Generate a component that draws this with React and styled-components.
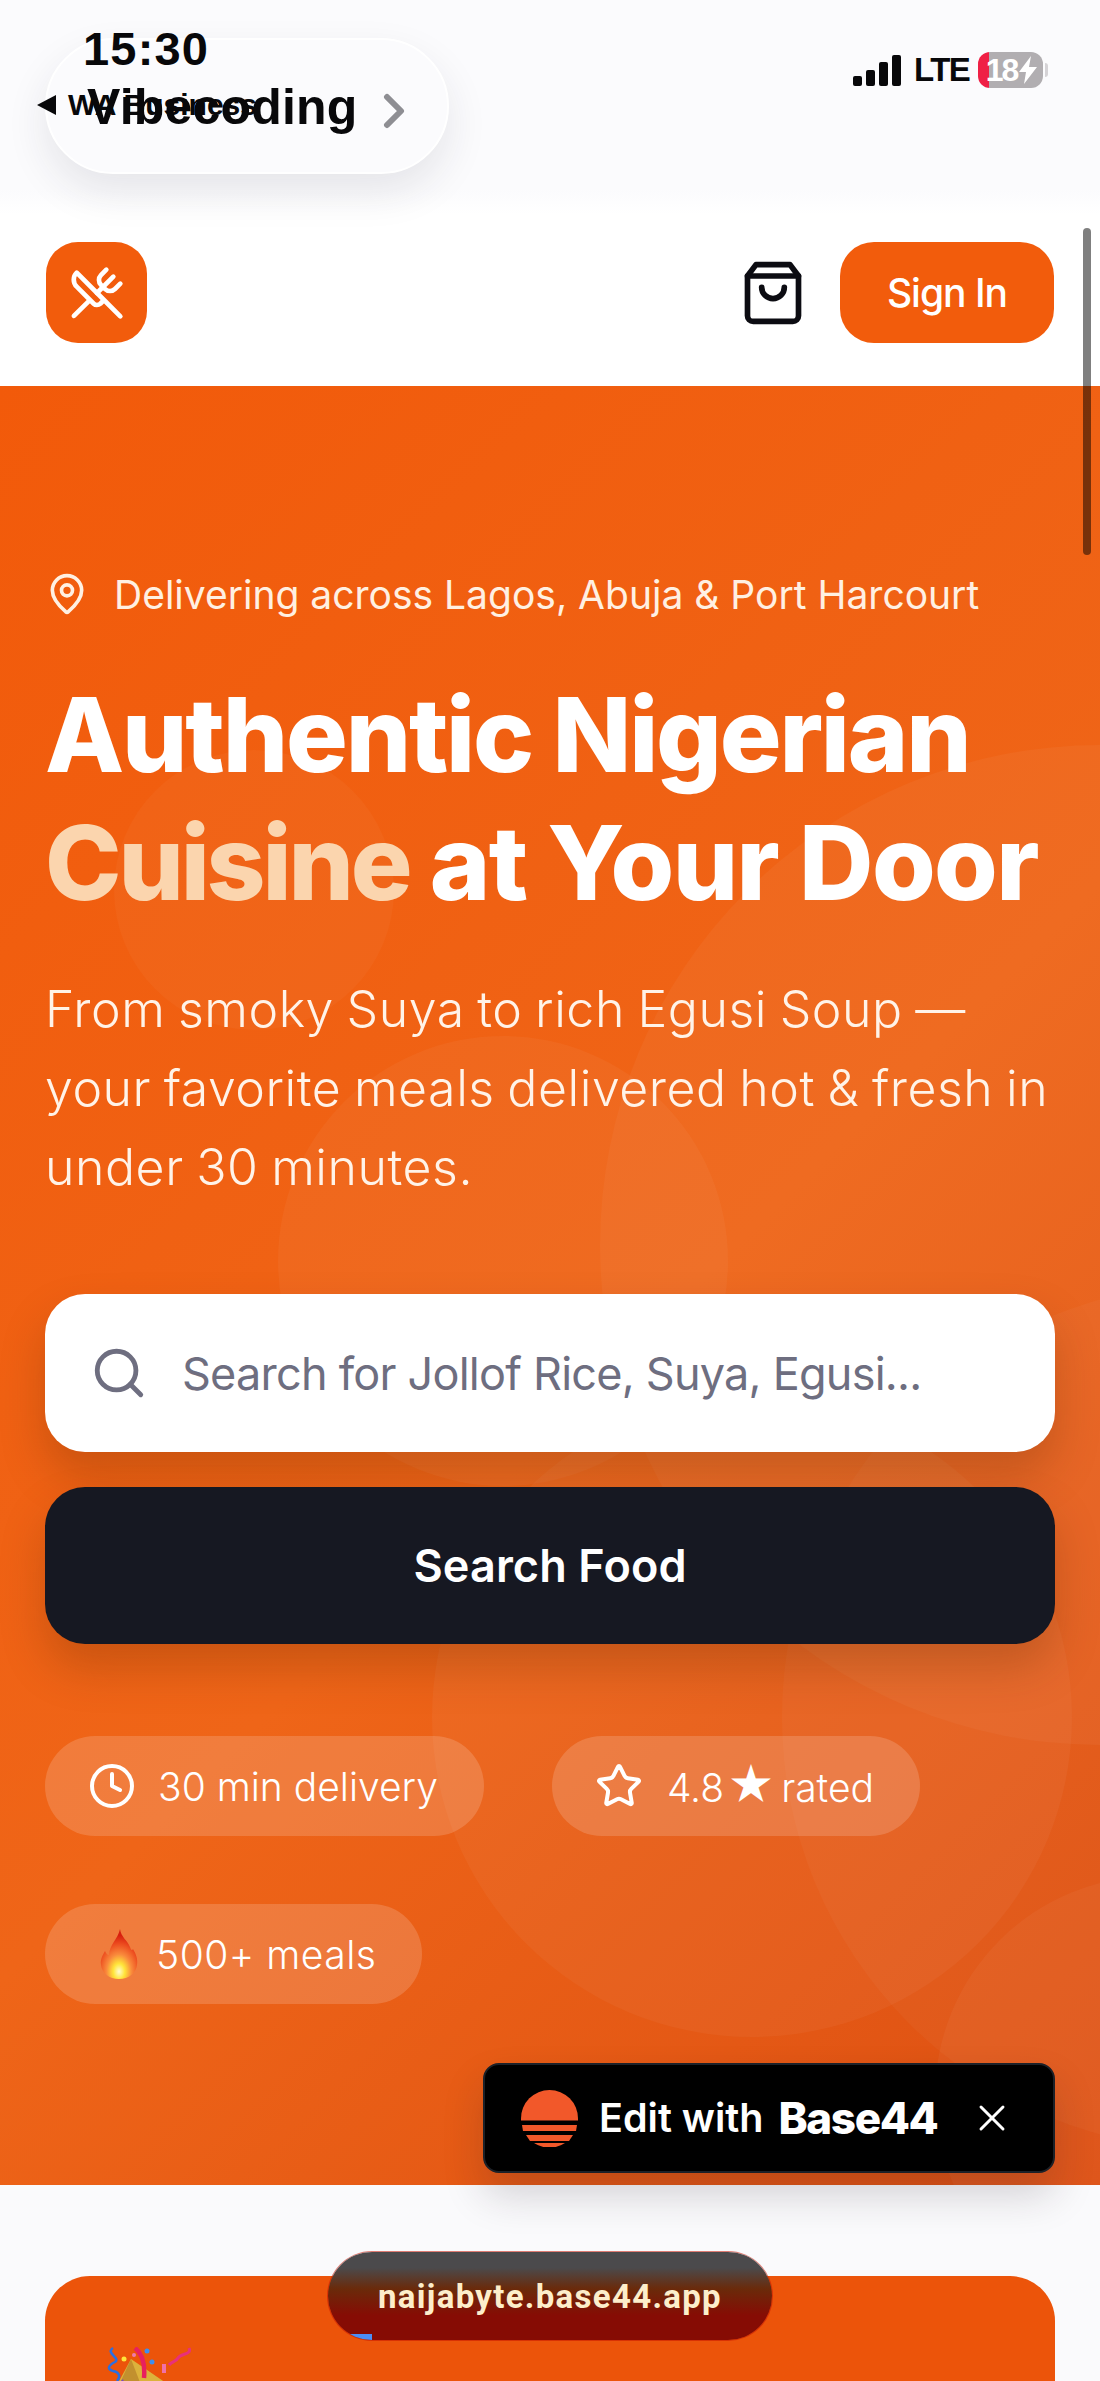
import React from 'react';
import styled, { createGlobalStyle } from 'styled-components';
import { Clock, MapPin, Search, Star, UtensilsCrossed, X } from 'lucide-react';

const GlobalStyle = createGlobalStyle`
  html, body {
    margin: 0;
    padding: 0;
    background: #fafafc;
  }
  * {
    box-sizing: border-box;
  }
`;

const Page = styled.div`
  position: relative;
  width: 1100px;
  height: 2381px;
  overflow: hidden;
  background: #fafafc;
  font-family: Inter, "Liberation Sans", sans-serif;
  color: #fff;
`;

/* phone chrome on top of the page */
const StatusArea = styled.div`
  height: 215px;
  background: linear-gradient(#fbfbfd 88%, #ffffff);
`;

const BackPill = styled.div`
  position: absolute;
  left: 45px;
  top: 38px;
  width: 404px;
  height: 136px;
  border-radius: 68px;
  background: #fbfbfd;
  border: 2px solid #ffffff;
  box-shadow: 0 18px 40px rgba(40, 40, 60, 0.1);
`;

const Time = styled.div`
  position: absolute;
  left: 83px;
  top: 23px;
  font-family: "Liberation Sans", sans-serif;
  font-size: 47px;
  line-height: 52px;
  font-weight: 700;
  letter-spacing: 1.2px;
  color: #08080a;
`;

const BackArrow = styled.div`
  position: absolute;
  left: 37px;
  top: 95px;
  width: 0;
  height: 0;
  border-top: 10px solid transparent;
  border-bottom: 10px solid transparent;
  border-right: 19px solid #08080a;
`;

const BackLabel = styled.div`
  position: absolute;
  left: 68px;
  top: 88px;
  font-family: "Liberation Sans", sans-serif;
  font-size: 30px;
  line-height: 34px;
  font-weight: 700;
  color: #08080a;
`;

const AppTitle = styled.div`
  position: absolute;
  left: 87px;
  top: 80px;
  font-family: "Liberation Sans", sans-serif;
  font-size: 50px;
  line-height: 54px;
  font-weight: 700;
  letter-spacing: 0.2px;
  color: #08080a;
`;

const PillChevron = styled.svg`
  position: absolute;
  left: 383px;
  top: 93px;
`;

const StatusRight = styled.div`
  position: absolute;
  left: 853px;
  top: 52px;
  display: flex;
  align-items: center;
  gap: 13px;
  height: 36px;
`;

const SignalBars = styled.div`
  display: flex;
  align-items: flex-end;
  gap: 4px;
  height: 32px;
`;

const SignalBar = styled.span`
  width: 9px;
  height: ${(p) => p.$h}px;
  border-radius: 2px;
  background: #08080a;
`;

const NetworkLabel = styled.span`
  font-family: "Liberation Sans", sans-serif;
  font-size: 33px;
  font-weight: 700;
  letter-spacing: -1.5px;
  color: #08080a;
`;

const Battery = styled.div`
  position: relative;
  display: flex;
  align-items: center;
  justify-content: flex-end;
  gap: 1px;
  width: 65px;
  height: 36px;
  margin-left: -4px;
  padding-right: 5px;
  border-radius: 12px;
  background: linear-gradient(90deg, #ef2045 17%, #b1aeb1 17%);
  font-family: "Liberation Sans", sans-serif;
  font-size: 32px;
  font-weight: 700;
  letter-spacing: -2px;
  color: #fff;

  &::after {
    content: '';
    position: absolute;
    right: -5px;
    top: 11px;
    width: 3px;
    height: 14px;
    border-radius: 0 3px 3px 0;
    background: #d5d3d6;
  }
`;

const Nav = styled.nav`
  display: flex;
  align-items: center;
  justify-content: space-between;
  height: 171px;
  padding: 0 46px 16px;
  background: #fff;
`;

const LogoTile = styled.div`
  display: flex;
  align-items: center;
  justify-content: center;
  width: 101px;
  height: 101px;
  border-radius: 32px;
  background: #f25c0c;
  color: #fff;
`;

const NavActions = styled.div`
  display: flex;
  align-items: center;
  gap: 33px;
`;

const CartButton = styled.div`
  display: flex;
  color: #0c0c12;
`;

const SignInButton = styled.div`
  display: flex;
  align-items: center;
  justify-content: center;
  width: 214px;
  height: 101px;
  border-radius: 34px;
  background: #f25c0c;
  font-size: 39px;
  font-weight: 500;
  letter-spacing: -1px;
  color: #fff;
`;

const Hero = styled.section`
  position: relative;
  height: 1799px;
  padding: 180px 45px 0;
  overflow: hidden;
  background: linear-gradient(135deg, #f25a0a 0%, #ef6518 55%, #dd5013 100%);
`;

const Blob = styled.div`
  position: absolute;
  left: ${(p) => p.$x}px;
  top: ${(p) => p.$y}px;
  width: ${(p) => p.$d}px;
  height: ${(p) => p.$d}px;
  border-radius: 50%;
  background: rgba(255, 255, 255, ${(p) => p.$a});
`;

const HeroContent = styled.div`
  position: relative;
`;

const LocationRow = styled.div`
  display: flex;
  align-items: center;
  gap: 25px;
  height: 56px;
  font-size: 39px;
  color: #fff0e2;
`;

const Headline = styled.h1`
  margin: 49px 0 0;
  font-size: 103px;
  line-height: 128px;
  font-weight: 800;
  letter-spacing: -2.2px;
  white-space: nowrap;
  color: #fff;
`;

const Accent = styled.span`
  letter-spacing: -3.2px;
  color: #fbd5ae;
`;

const HeadlineTail = styled.span`
  letter-spacing: -1.6px;
`;

const Lead = styled.p`
  margin: 43px 0 0;
  font-size: 50px;
  line-height: 79px;
  font-weight: 300;
  letter-spacing: 0.55px;
  word-spacing: -2px;
  white-space: nowrap;
  color: #fff3e8;
`;

const SearchBox = styled.div`
  display: flex;
  align-items: center;
  gap: 34px;
  height: 158px;
  margin-top: 87px;
  padding: 0 45px;
  border-radius: 40px;
  background: #fff;
  box-shadow: 0 24px 44px rgba(90, 40, 0, 0.25);
  font-size: 45px;
  letter-spacing: -0.76px;
  color: #6e6e80;
`;

const SearchButton = styled.div`
  display: flex;
  align-items: center;
  justify-content: center;
  height: 157px;
  margin-top: 35px;
  border-radius: 40px;
  background: #161822;
  box-shadow: 0 24px 44px rgba(90, 40, 0, 0.25);
  font-size: 45px;
  font-weight: 600;
  letter-spacing: 0.1px;
  color: #fff;
`;

const Chips = styled.div`
  display: flex;
  flex-wrap: wrap;
  gap: 68px;
  margin-top: 92px;
`;

const Chip = styled.div`
  display: flex;
  align-items: center;
  gap: ${(p) => p.$gap}px;
  height: 100px;
  padding: 0 46px 0 ${(p) => p.$pad}px;
  border-radius: 50px;
  background: rgba(255, 255, 255, 0.16);
  font-size: 39px;
  font-weight: 300;
  letter-spacing: ${(p) => p.$track}px;
  white-space: nowrap;
  color: #fff;
`;

const StarMark = styled.span`
  margin: 0 6px 0 3px;
  font-size: 46px;
  line-height: 1;
`;

const Offers = styled.section`
  padding: 91px 45px 0;
`;

const PromoCard = styled.div`
  height: 400px;
  padding: 71px 0 0 62px;
  border-radius: 45px;
  background: #ec540a;
`;

const ScrollThumb = styled.div`
  position: absolute;
  left: 1083px;
  top: 228px;
  width: 8px;
  height: 327px;
  border-radius: 4px;
  background: rgba(0, 0, 0, 0.5);
`;

const EditBadge = styled.div`
  position: absolute;
  left: 483px;
  top: 2063px;
  display: flex;
  align-items: center;
  width: 572px;
  height: 110px;
  padding: 0 0 0 36px;
  border: 2px solid #1c2128;
  border-radius: 16px;
  background: #000;
  box-shadow: 0 22px 40px rgba(40, 30, 40, 0.18);
  color: #fff;
`;

const EditLabel = styled.span`
  margin-left: 21px;
  font-size: 39.5px;
  font-weight: 600;
`;

const BrandName = styled.span`
  margin-left: 15px;
  font-size: 44px;
  font-weight: 800;
  letter-spacing: -1.4px;
`;

const CloseMark = styled.span`
  display: flex;
  margin-left: 33px;
`;

const UrlPill = styled.div`
  position: absolute;
  left: 328px;
  top: 2252px;
  display: flex;
  align-items: center;
  justify-content: center;
  width: 444px;
  height: 88px;
  overflow: hidden;
  border-radius: 44px;
  background: linear-gradient(#4b4a4c 0%, #4b4a4c 18%, #6a2a0a 42%, #860c04 72%);
  box-shadow: 0 0 0 1px rgba(200, 20, 0, 0.55);
  font-family: Roboto, "Liberation Sans", sans-serif;
  font-size: 33px;
  font-weight: 700;
  letter-spacing: 1.3px;
  color: #fdeecb;
`;

const LoadBar = styled.span`
  position: absolute;
  left: 0;
  bottom: 0;
  width: 44px;
  height: 6px;
  background: #4b8ef5;
`;

const BagIcon = () => (
  <svg width="68" height="68" viewBox="0 0 24 24" fill="none" stroke="currentColor" strokeWidth="2" strokeLinecap="round" strokeLinejoin="round">
    <path d="M6 2 3 6v14a2 2 0 0 0 2 2h14a2 2 0 0 0 2-2V6l-3-4Z" />
    <path d="M3 6h18" />
    <path d="M16 10a4 4 0 0 1-8 0" />
  </svg>
);

const BoltIcon = () => (
  <svg width="20" height="28" viewBox="0 0 20 28">
    <path d="M13 0 1 16h7l-2 12 13-17h-8Z" fill="#fff" />
  </svg>
);

const FlameIcon = () => (
  <svg width="38" height="50" viewBox="0 0 38 50">
    <defs>
      <radialGradient id="flame" cx="50%" cy="85%" r="72%">
        <stop offset="0%" stopColor="#fffbd0" />
        <stop offset="22%" stopColor="#ffe53a" />
        <stop offset="48%" stopColor="#f98a3c" />
        <stop offset="78%" stopColor="#ec4a1e" />
        <stop offset="100%" stopColor="#d8200e" />
      </radialGradient>
    </defs>
    <path
      d="M20 0c1 8 7 11 10 18 1 3 2 4 3 2 3 5 5 10 4 16-1 8-8 14-18 14S2 44 1 36c-1-6 2-10 4-14 1 2 2 4 4 4 0-10 9-16 11-26Z"
      fill="url(#flame)"
    />
  </svg>
);

const PopperIcon = () => (
  <svg width="90" height="40" viewBox="0 0 90 40">
    <path d="M24 12 62 38H10Z" fill="#dcb23c" />
    <path d="M24 12 34 38H12Z" fill="#c2902e" />
    <path d="M10 38h8l-2-6Z" fill="#7a44c8" />
    <path d="M6 1C-2 6 14 11 8 15 2 18-1 22 6 24c6 1 8 5 4 10" fill="none" stroke="#2c6fe0" strokeWidth="2.5" />
    <path d="M28 1c8 6 10 18 9 30" fill="none" stroke="#e8205e" strokeWidth="4.5" />
    <path d="M82 1c3 7-8 5-11 10-2 4-6 3-9 7" fill="none" stroke="#e8307a" strokeWidth="3" />
    <path d="M57 17v9" stroke="#f070a8" strokeWidth="4" />
    <path d="M61 35h22v3H61Z" fill="#3d8ef0" />
    <circle cx="17" cy="12" r="2.5" fill="#ffe53a" />
    <circle cx="40" cy="4" r="2.5" fill="#3d8ef0" />
    <circle cx="45" cy="15" r="2.5" fill="#3d8ef0" />
    <circle cx="27" cy="8" r="2" fill="#f07ab0" />
  </svg>
);

const BaseLogo = () => (
  <svg width="57" height="57" viewBox="0 0 57 57">
    <path d="M0 28.5a28.5 28.5 0 0 1 57 0v2H0Z" fill="#f2582a" />
    <path d="M1 35h55l-1 6H2Z" fill="#f2582a" />
    <path d="M5 45h47l-4 6H9Z" fill="#f2582a" />
    <path d="M13 53h31a28 28 0 0 1-31 0Z" fill="#f2582a" />
  </svg>
);

export default function App() {
  return (
    <Page>
      <GlobalStyle />
      <StatusArea />
      <Nav>
        <LogoTile>
          <UtensilsCrossed size={56} strokeWidth={2} />
        </LogoTile>
        <NavActions>
          <CartButton>
            <BagIcon />
          </CartButton>
          <SignInButton>Sign In</SignInButton>
        </NavActions>
      </Nav>

      <Hero>
        <Blob $x={114} $y={364} $d={280} $a={0.03} />
        <Blob $x={600} $y={359} $d={1000} $a={0.04} />
        <Blob $x={278} $y={650} $d={450} $a={0.04} />
        <Blob $x={432} $y={1011} $d={640} $a={0.04} />
        <Blob $x={782} $y={898} $d={866} $a={0.03} />
        <Blob $x={935} $y={1490} $d={440} $a={0.04} />
        <HeroContent>
          <LocationRow>
            <MapPin size={44} strokeWidth={2} />
            Delivering across Lagos, Abuja &amp; Port Harcourt
          </LocationRow>
          <Headline>
            Authentic Nigerian
            <br />
            <Accent>Cuisine</Accent> <HeadlineTail>at Your Door</HeadlineTail>
          </Headline>
          <Lead>
            From smoky Suya to rich Egusi Soup —
            <br />
            your favorite meals delivered hot &amp; fresh in
            <br />
            under 30 minutes.
          </Lead>
          <SearchBox>
            <Search size={58} strokeWidth={2} />
            Search for Jollof Rice, Suya, Egusi...
          </SearchBox>
          <SearchButton>Search Food</SearchButton>
          <Chips>
            <Chip $gap={22} $pad={43} $track={0}>
              <Clock size={48} strokeWidth={2} />
              30 min delivery
            </Chip>
            <Chip $gap={24} $pad={43} $track={0}>
              <Star size={48} strokeWidth={2} />
              <span>
                4.8<StarMark>★</StarMark>rated
              </span>
            </Chip>
            <Chip $gap={18} $pad={55} $track={0.5}>
              <FlameIcon />
              500+ meals
            </Chip>
          </Chips>
        </HeroContent>
      </Hero>

      <Offers>
        <PromoCard>
          <PopperIcon />
        </PromoCard>
      </Offers>

      <BackPill />
      <Time>15:30</Time>
      <BackArrow />
      <BackLabel>WA Business</BackLabel>
      <AppTitle>Vibecoding</AppTitle>
      <PillChevron width="22" height="36" viewBox="0 0 22 36">
        <path d="M4 4 18 18 4 32" fill="none" stroke="#8e8e93" strokeWidth="6" strokeLinecap="round" strokeLinejoin="round" />
      </PillChevron>
      <StatusRight>
        <SignalBars>
          <SignalBar $h={10} />
          <SignalBar $h={16} />
          <SignalBar $h={24} />
          <SignalBar $h={31} />
        </SignalBars>
        <NetworkLabel>LTE</NetworkLabel>
        <Battery>
          18
          <BoltIcon />
        </Battery>
      </StatusRight>
      <ScrollThumb />

      <EditBadge>
        <BaseLogo />
        <EditLabel>Edit with</EditLabel>
        <BrandName>Base44</BrandName>
        <CloseMark>
          <X size={44} strokeWidth={1.6} />
        </CloseMark>
      </EditBadge>
      <UrlPill>
        naijabyte.base44.app
        <LoadBar />
      </UrlPill>
    </Page>
  );
}
